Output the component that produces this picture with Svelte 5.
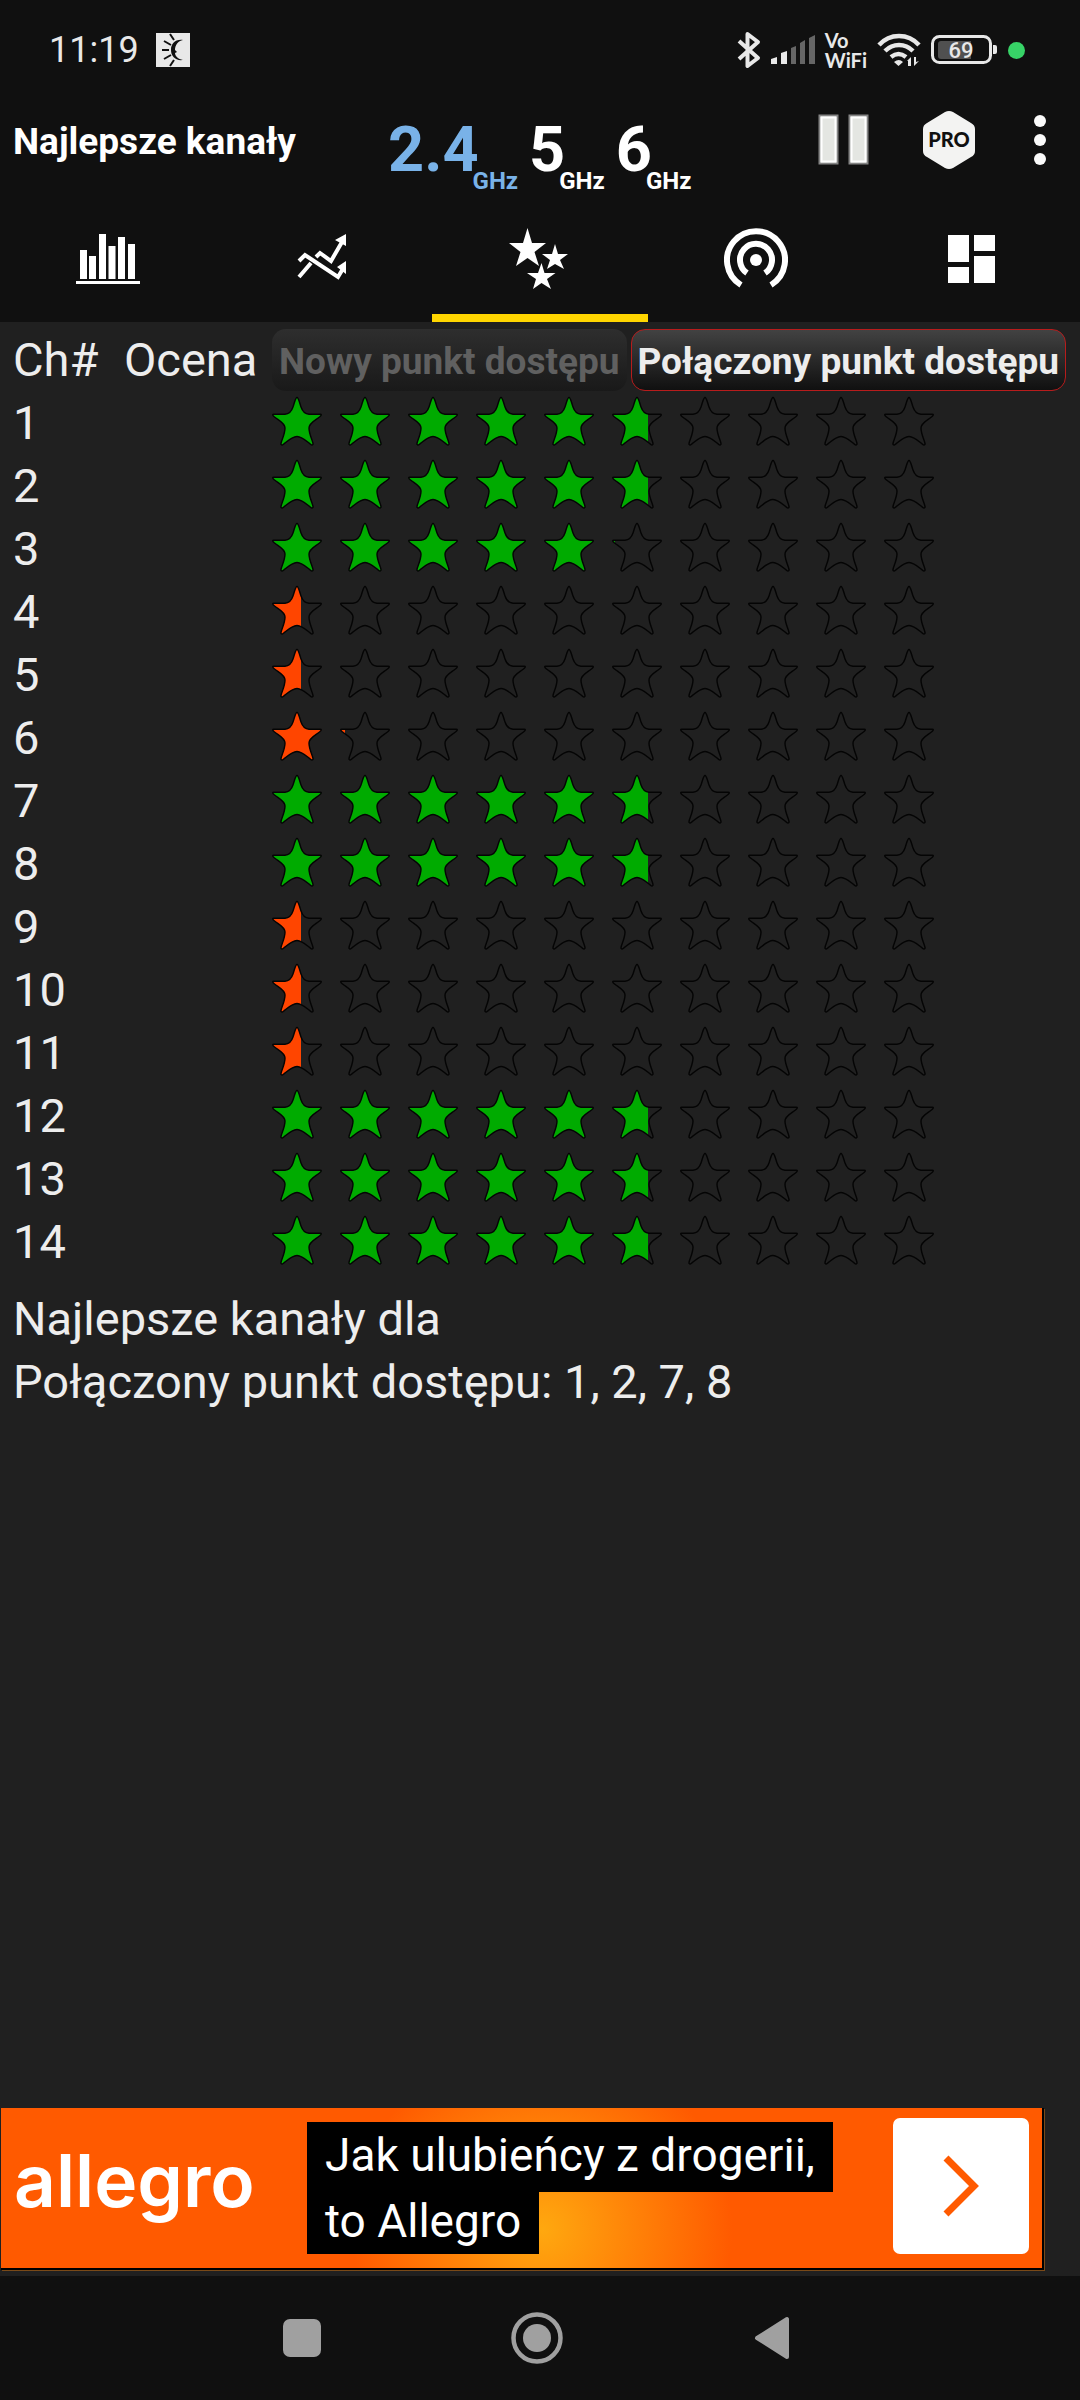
<script>
  const tabs = ["Wykres kanałów", "Wykres czasowy", "Najlepsze kanały", "Punkty dostępu", "Panel"];
  const bands = ["2.4", "5", "6"];

  let activeTab = $state(2);
  let activeBand = $state("2.4");
  let target = $state("connected");

  const ratings = [5.72, 5.72, 5.06, 0.58, 0.58, 1.09, 5.72, 5.72, 0.58, 0.58, 0.58, 5.72, 5.72, 5.72];

  // stars advance by 68px, each drawn 50px wide
  const fillWidth = (score) => {
    const full = Math.floor(score);
    return Math.round(full * 68 + (score - full) * 50);
  };
</script>

<svelte:head>
  <title>Najlepsze kanały</title>
</svelte:head>

{#snippet star(i)}
  <path
    transform="translate({i * 68} 0)"
    d="M25 1.500C26.500 1.500 27 5 29 11C30.500 15.500 33 18 37 18.200L48 18.200C50 18.200 49.500 19.500 47.500 21C43 24.500 37 27 37 32C37 38 40 43 41 47.500C41.300 49 40 49.500 38.500 48.300C35 45.500 30 40.500 25 40.500C20 40.500 15 45.500 11.500 48.300C10 49.500 8.700 49 9 47.500C10 43 13 38 13 32C13 27 7 24.500 2.500 21C.5 19.500 0 18.200 2 18.200L13 18.200C17 18 19.500 15.500 21 11C23 5 23.500 1.500 25 1.500Z" />
{/snippet}

<div class="screen">
  <header>
    <div class="status">
      <div class="left">
        <time>11:19</time>
        <svg width="34" height="34" viewBox="0 0 34 34">
          <path d="M0 0h34v34H0z" fill="#e8e8e8" />
          <path d="M27 7C19 6 15 11 15 17s4 11 12 10c-5-1-8-4-8-7l2-1-2-2c0-5 3-9 8-10z" fill="#101010" />
          <path d="M14 1l4 6M8 8l7 4M6 17h7M8 26l7-4M14 33l4-6" stroke="#101010" stroke-width="2" />
        </svg>
      </div>
      <div class="right">
        <svg width="24" height="38" viewBox="0 0 24 38">
          <path d="M2 10l19 17-10.500 8V3L21 11 2 28" fill="none" stroke="#e8e8e8" stroke-width="4" stroke-linejoin="round" />
        </svg>
        <svg width="44" height="30" viewBox="0 0 44 30">
          <path d="M0 24l6-2v7H0zM10 18l6-2v13h-6z" fill="#e8e8e8" />
          <path d="M20 13l5-2v18h-5zM29 8l5-3v24h-5zM38 3l6-3v29h-6z" fill="#666" />
        </svg>
        <span class="vowifi">Vo<br />WiFi</span>
        <svg width="44" height="34" viewBox="0 0 44 34">
          <path d="M2 12C13 0 31 0 42 12M8 18c8-8 20-8 28 0M14 24c5-4 10-4 15 0" fill="none" stroke="#e8e8e8" stroke-width="4.500" />
          <path d="M17 29q5-4 9 0l-4.500 4zM30 28l4-4v9h-3v-5zM37 24h2v5l3-1-5 5z" fill="#e8e8e8" />
        </svg>
        <svg width="67" height="30" viewBox="0 0 67 30">
          <rect x="1.500" y="1.500" width="58" height="26" rx="7" fill="none" stroke="#e8e8e8" stroke-width="3" />
          <path d="M10 6h30v18H10q-3 0-3-3V9q0-3 3-3z" fill="#505050" />
          <path d="M62 10h2q2 0 2 2v5q0 2-2 2h-2z" fill="#e8e8e8" />
          <text x="30" y="23" text-anchor="middle" font-size="22" font-weight="500" fill="#e8e8e8">69</text>
        </svg>
        <i class="dot"></i>
      </div>
    </div>

    <div class="appbar">
      <h1>Najlepsze kanały</h1>
      <div class="bands">
        {#each bands as band}
          <button class="band" class:active={activeBand === band} onclick={() => (activeBand = band)}>
            <b>{band}</b><small>GHz</small>
          </button>
        {/each}
      </div>
      <div class="actions">
        <button aria-label="Wstrzymaj">
          <svg width="52" height="52" viewBox="0 0 52 52">
            <path d="M1.500 1.500h18v48h-18zM31.500 1.500h18v48h-18z" fill="#e4e6e2" stroke="#858585" stroke-width="2" />
            <path d="M3.500 3.500h14v44h-14zM33.500 3.500h14v44h-14z" fill="none" stroke="#fff" stroke-width="2" />
          </svg>
        </button>
        <button aria-label="PRO">
          <svg width="52" height="58" viewBox="0 0 52 58">
            <path d="M22 1q4-2 8 0l18 11q4 2 4 6v22q0 4-4 6L30 57q-4 2-8 0L4 46q-4-2-4-6V18q0-4 4-6z" fill="#f3f3f2" />
            <text x="26" y="36" text-anchor="middle" class="pro">PRO</text>
          </svg>
        </button>
        <button aria-label="Więcej">
          <svg width="24" height="50" viewBox="0 0 24 50">
            <g fill="#fafafa"><circle cx="12" cy="6" r="6" /><circle cx="12" cy="25" r="6" /><circle cx="12" cy="44" r="6" /></g>
          </svg>
        </button>
      </div>
    </div>

    <nav class="tabs">
      {#each tabs as tab, i}
        <button aria-label={tab} class:active={activeTab === i} onclick={() => (activeTab = i)}>
          <svg width="64" height="64" viewBox="0 0 64 64" fill="#fff">
            {#if i === 0}
              <path d="M4 24h7v29H4zM13 30h7v23h-7zM23 8h7v45h-7zM32.500 20h7v33h-7zM42 11h7v42h-7zM52 18h7v35h-7zM0 55h64v3H0z" />
            {:else if i === 1}
              <g fill="none" stroke="#fff" stroke-width="4">
                <path d="M7 51l12-14M7 35l6-6 33 22 6-10M24 31l4-4 11 8 11-19" />
              </g>
              <path d="M54 8v12l-11-6zM54 35v13l-9-7z" />
            {:else if i === 2}
              <path d="M19.500 2L24 17h14l-11.500 9L31 40l-11.500-8L8 40l4.500-14L1 17h14z" />
              <path d="M47 18l3 10h10l-8 6 4 9-9-5-8 5 3-9-8-6h10zM33.500 37l3 10h11l-8.500 6 4 10-9.500-6-8.500 6 3-10-9-6h11z" />
            {:else if i === 3}
              <g fill="none" stroke="#fff" stroke-width="6">
                <path d="M17 59A29 29 0 1 1 47 59" />
                <path d="M23 47A16 16 0 1 1 41 47" />
              </g>
              <circle cx="32" cy="34" r="6" />
            {:else}
              <path d="M8 9h21v27H8zM34 9h21v16H34zM8 41h21v16H8zM34 30h21v27H34z" />
            {/if}
          </svg>
        </button>
      {/each}
    </nav>
  </header>

  <main>
    <table>
      <thead>
        <tr>
          <th>Ch#</th>
          <th>Ocena</th>
          <th>
            <div class="switch">
              <button class:on={target === "new"} onclick={() => (target = "new")}>Nowy punkt dostępu</button>
              <button class:on={target === "connected"} onclick={() => (target = "connected")}>Połączony punkt dostępu</button>
            </div>
          </th>
        </tr>
      </thead>
      <tbody>
        {#each ratings as score, channel}
          <tr>
            <td colspan="2">{channel + 1}</td>
            <td>
              <svg class="stars" class:low={score < 3} width="662" height="50" viewBox="0 0 662 50">
                <clipPath id="fill{channel}"><rect width={fillWidth(score)} height="50" /></clipPath>
                <g class="full" clip-path="url(#fill{channel})">
                  {#each { length: 10 } as _, i}{@render star(i)}{/each}
                </g>
                <g class="outline">
                  {#each { length: 10 } as _, i}{@render star(i)}{/each}
                </g>
              </svg>
            </td>
          </tr>
        {/each}
      </tbody>
    </table>
    <p class="best">Najlepsze kanały dla<br />Połączony punkt dostępu: 1, 2, 7, 8</p>
  </main>

  <a class="ad" href="#allegro">
    <span class="logo">allegro</span>
    <span class="slogan"><span>Jak ulubieńcy z drogerii,</span><span>to Allegro</span></span>
    <span class="go">
      <svg width="36" height="62" viewBox="0 0 36 62">
        <path d="M3 3l28 28L3 59" fill="none" stroke="#ff5a00" stroke-width="7" />
      </svg>
    </span>
  </a>

  <footer>
    <button aria-label="Ostatnie">
      <svg width="54" height="54" viewBox="0 0 54 54"><rect x="8" y="8" width="38" height="38" rx="7" fill="#a0a0a0" /></svg>
    </button>
    <button aria-label="Ekran główny">
      <svg width="54" height="54" viewBox="0 0 54 54">
        <circle cx="27" cy="27" r="23.500" fill="none" stroke="#a0a0a0" stroke-width="4.500" />
        <circle cx="27" cy="27" r="14" fill="#a0a0a0" />
      </svg>
    </button>
    <button aria-label="Wstecz">
      <svg width="54" height="54" viewBox="0 0 54 54">
        <path d="M12 27L42 8v38z" fill="#a0a0a0" stroke="#a0a0a0" stroke-width="4" stroke-linejoin="round" />
      </svg>
    </button>
  </footer>
</div>

<style>
  :global(body) {
    background: #202020;
  }
  .screen {
    display: flex;
    flex-direction: column;
    min-height: 100vh;
    color: #ededed;
    font-family: Roboto, "Liberation Sans", sans-serif;
  }
  button {
    padding: 0;
    border: 0;
    background: none;
    color: inherit;
    font: inherit;
    cursor: pointer;
  }
  svg {
    display: block;
  }
  header,
  footer {
    background: #101010;
  }
  .status,
  .left,
  .right,
  .appbar,
  .actions {
    display: flex;
    align-items: center;
  }
  .status {
    justify-content: space-between;
    height: 100px;
    padding: 0 55px 0 49px;
    color: #e8e8e8;
    font-size: 36px;
  }
  .left {
    gap: 17px;
  }
  .right {
    gap: 10px;
  }
  .vowifi {
    font: 700 20px/20px Lato, sans-serif;
  }
  .dot {
    width: 17px;
    height: 17px;
    border-radius: 50%;
    background: #37d367;
  }
  .appbar {
    height: 100px;
    padding: 0 28px 0 13px;
    color: #fff;
  }
  h1 {
    width: 375px;
    margin: 0;
    padding-bottom: 16px;
    font-size: 37px;
    line-height: 42px;
  }
  .bands {
    display: flex;
    flex: 1;
    gap: 11px;
  }
  .band {
    display: flex;
    align-items: flex-end;
  }
  .band b {
    font-size: 63px;
    line-height: 84px;
  }
  .band small {
    margin: 0 0 -3px -6px;
    font-size: 24px;
    font-weight: 700;
    line-height: 28px;
  }
  .band.active {
    color: #79b2e8;
  }
  .actions {
    gap: 53px;
    padding-bottom: 20px;
  }
  .pro {
    font: 900 20px Lato, sans-serif;
    fill: #101010;
  }
  .tabs {
    display: grid;
    grid-template-columns: repeat(5, 1fr);
    height: 122px;
  }
  .tabs button {
    display: flex;
    justify-content: center;
    padding-top: 26px;
    border-bottom: 8px solid transparent;
  }
  .tabs .active {
    border-color: #ffd600;
  }
  main {
    flex: 1;
    padding: 6px 12px 0 13px;
  }
  table {
    width: 100%;
    border-collapse: collapse;
    font-size: 47px;
  }
  th,
  td {
    height: 63px;
    padding: 0;
    font-weight: 400;
    line-height: 63px;
    text-align: left;
    white-space: nowrap;
  }
  th:first-child {
    width: 111px;
  }
  th:nth-child(2) {
    width: 148px;
  }
  .switch {
    display: flex;
    gap: 4px;
  }
  .switch button {
    height: 62px;
    padding: 0 6px;
    border: 1px solid transparent;
    border-radius: 14px;
    background: linear-gradient(#2e2e2e, #191919) border-box;
    color: #606060;
    font-size: 37px;
    font-weight: 700;
  }
  .switch .on {
    border-color: #b71c1c;
    background: linear-gradient(#424242, #101010);
    color: #ededed;
  }
  .stars {
    margin-bottom: 4px;
  }
  .full {
    fill: #00ab00;
  }
  .low .full {
    fill: #ff4500;
  }
  .outline {
    fill: none;
    stroke: #040404;
    stroke-width: 1.4;
  }
  .best {
    margin: 14px 0 0;
    font-size: 47px;
    line-height: 63px;
  }
  .ad {
    display: flex;
    align-items: center;
    height: 160px;
    margin: 0 36px 6px 1px;
    padding: 0 13px;
    border: solid #000;
    border-width: 0 2px 2px 0;
    background: radial-gradient(circle 190px at 52% 76%, #ffa80f, #ff5a00) #ff5a00;
    box-shadow: 1px 1px #7a4a18;
    color: #fff;
    text-decoration: none;
  }
  .logo {
    width: 293px;
    padding-bottom: 16px;
    font-family: Inter, sans-serif;
    font-size: 73px;
    font-weight: 600;
  }
  .slogan {
    display: flex;
    flex: 1;
    flex-direction: column;
    align-items: flex-start;
    font-size: 46px;
    line-height: 66px;
  }
  .slogan span {
    padding: 0 18px;
    background: #000;
  }
  .slogan span:first-child {
    padding-bottom: 4px;
  }
  .slogan span:last-child {
    padding-bottom: 4px;
    line-height: 58px;
  }
  .go {
    display: grid;
    width: 136px;
    height: 136px;
    margin-bottom: 4px;
    place-items: center;
    border-radius: 7px;
    background: #fff;
  }
  footer {
    display: flex;
    justify-content: center;
    gap: 181px;
    height: 124px;
    padding-right: 6px;
  }
</style>
